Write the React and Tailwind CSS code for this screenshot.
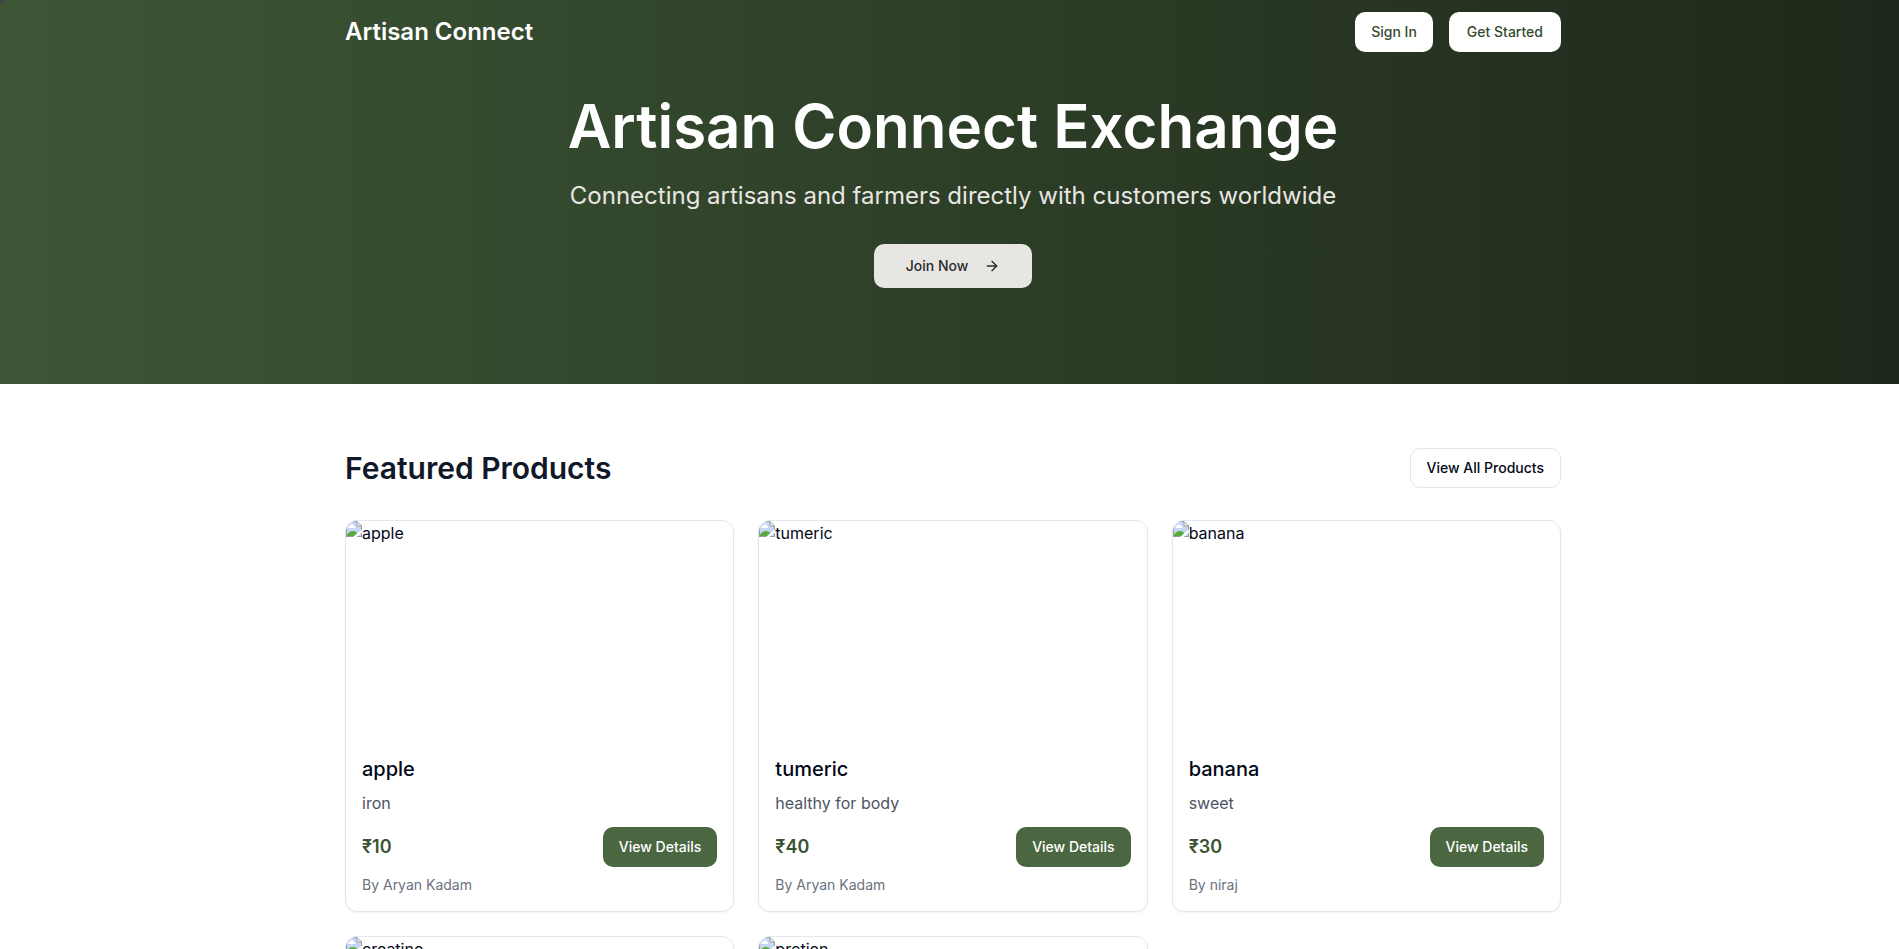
import { ArrowRight } from "lucide-react";

const products = [
  { name: "apple", description: "iron", price: 10, seller: "Aryan Kadam" },
  { name: "tumeric", description: "healthy for body", price: 40, seller: "Aryan Kadam" },
  { name: "banana", description: "sweet", price: 30, seller: "niraj" },
  { name: "creatine", description: "supplement", price: 50, seller: "niraj" },
  { name: "protien", description: "supplement", price: 60, seller: "niraj" },
];

function MissingImageIcon() {
  return (
    <svg className="size-4 shrink-0" viewBox="0 0 16 16" aria-hidden="true">
      <path d="M0 0h11l5 5v11H0z" fill="#c5d6f7" />
      <path d="M2.500 6.500a1.600 1.600 0 0 1 1.300-1.800 2.200 2.200 0 0 1 4-.2 1.300 1.300 0 0 1 .5 2.500H3.500a1 1 0 0 1-1-.5z" fill="#fff" />
      <path d="M1 15.500v-1.500c1.500-2.500 3.500-4 6-4 1.800 0 3.200.8 4.200 2L8 15.500z" fill="#57ab3a" />
      <path d="M11 0v5h5z" fill="#fff" />
      <path d="M.5 16V.5H11l4.500 4.500v11M11 .5V5h4.500M0 15.500h16" fill="none" stroke="#9a9a9a" />
      <path d="M7 16 16 8.500v3L10.500 16z" fill="#fff" />
    </svg>
  );
}

function ProductCard({ product }) {
  return (
    <article className="overflow-hidden rounded-xl border border-[#e2e8f0] bg-white shadow-xs">
      <div className="flex aspect-video items-start">
        <MissingImageIcon />
        <span>{product.name}</span>
      </div>
      <div className="p-4">
        <h3 className="mb-2 text-xl font-medium">{product.name}</h3>
        <p className="mb-3 text-[#4b5563]">{product.description}</p>
        <div className="flex items-center justify-between">
          <span className="text-lg font-semibold text-[#3a5232]">₹{product.price}</span>
          <button className="h-10 rounded-[10px] bg-[#4a6741] px-4 text-sm font-medium text-white">
            View Details
          </button>
        </div>
        <p className="mt-2 text-sm text-[#6b7280]">By {product.seller}</p>
      </div>
    </article>
  );
}

export default function App() {
  return (
    <div className="bg-white font-['Inter','Noto_Sans',sans-serif] text-[#020817]">
      <div className="bg-[#45424a]">
        <header className="rounded-tl-lg bg-linear-to-r/srgb from-[#3d5635] to-[#1e281a] pl-[7px] text-white">
          <nav className="mx-auto flex h-16 max-w-7xl items-center justify-between px-8">
            <a href="#" className="text-2xl font-semibold">Artisan Connect</a>
            <div className="flex gap-4">
              <button className="h-10 rounded-[10px] bg-white px-4 text-sm font-medium text-[#364a30]">Sign In</button>
              <button className="h-10 rounded-[10px] bg-white px-[18px] text-sm font-medium text-[#364a30]">Get Started</button>
            </div>
          </nav>
          <div className="mx-auto flex max-w-7xl flex-col items-center px-8 pt-8 pb-24 text-center">
            <h1 className="mb-6 text-6xl leading-none font-semibold">Artisan Connect Exchange</h1>
            <p className="mb-8 text-2xl text-[#e8e6e3]">
              Connecting artisans and farmers directly with customers worldwide
            </p>
            <button className="flex h-11 items-center gap-4 rounded-[10px] bg-[#e8e6e3] px-8 text-sm font-medium text-[#2b2b2b]">
              Join Now
              <ArrowRight className="size-4" />
            </button>
          </div>
        </header>
      </div>
      <main className="pl-[7px]">
        <section className="mx-auto max-w-7xl px-8 py-16">
          <div className="mb-8 flex items-center justify-between">
            <h2 className="text-3xl font-semibold text-[#111827]">Featured Products</h2>
            <button className="h-10 rounded-[10px] border border-[#e2e8f0] bg-white px-4 text-sm font-medium">
              View All Products
            </button>
          </div>
          <div className="grid grid-cols-3 gap-6">
            {products.map((product) => (
              <ProductCard key={product.name} product={product} />
            ))}
          </div>
        </section>
      </main>
    </div>
  );
}
